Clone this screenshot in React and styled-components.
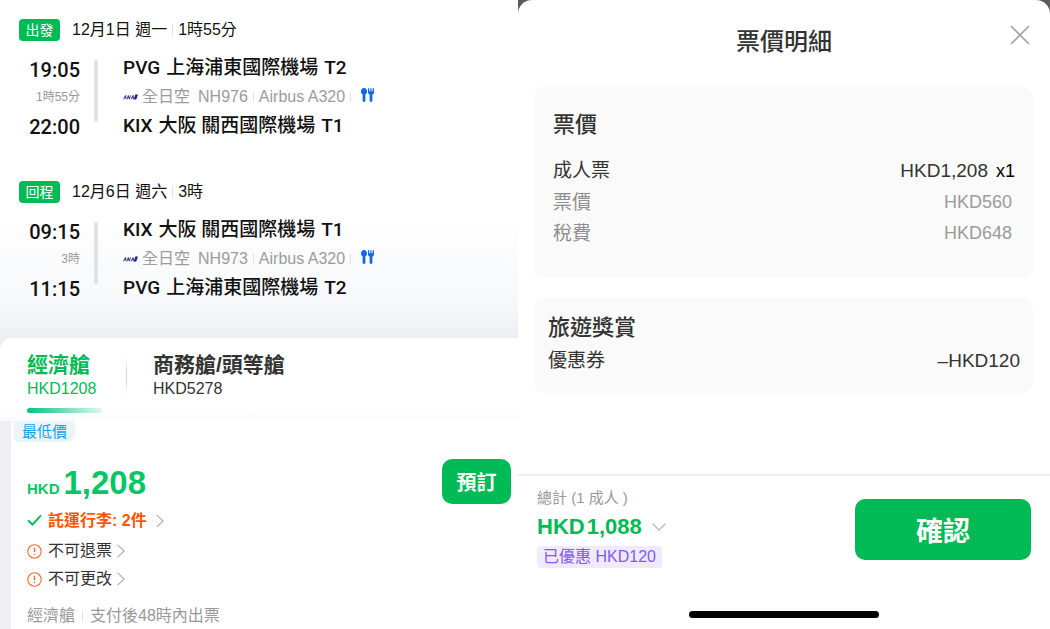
import React from 'react';
import styled, { createGlobalStyle } from 'styled-components';

const text = '"Liberation Sans", "Noto Sans CJK TC", sans-serif';
const medium = 'Roboto, "Noto Sans CJK TC", sans-serif';
const green = '#00ba55';

const GlobalStyle = createGlobalStyle`
  * { box-sizing: border-box; }
  body { margin: 0; background: #fff; font-family: ${text}; color: #333; }
  h1, h2, p, dl, dt, dd { margin: 0; font-weight: 400; }
  button { font-family: ${text}; border: 0; padding: 0; background: none; color: inherit; cursor: pointer; }
  svg { display: block; flex: none; }
`;

const Page = styled.div`
  display: grid;
  grid-template-columns: 518fr 532fr;
  min-height: 100vh;
`;

/* flight pane */

const FlightPane = styled.main`
  display: flex;
  flex-direction: column;
  min-width: 0;
`;

const Itinerary = styled.div`
  display: flex;
  flex-direction: column;
  gap: 39px;
  padding: 19px 19px 47px;
  margin-bottom: -13px;
  background: linear-gradient(#fff 62%, #f6f7fa 88%, #ebeef4 97%);
`;

const LegHeader = styled.div`
  display: flex;
  align-items: center;
  height: 22px;
  font-size: 16px;
  line-height: 22px;
  color: #111;
`;

const LegTag = styled.span`
  width: 41px;
  margin-right: 12px;
  border-radius: 4px;
  background: ${green};
  color: #fff;
  font-size: 14px;
  line-height: 22px;
  text-align: center;
`;

const Divider = styled.span`
  width: 1px;
  height: ${p => p.$h || 12}px;
  margin: 0 ${p => p.$gap || 5}px;
  background: #e2e2e2;
`;

const LegBody = styled.div`
  display: flex;
  margin-top: 12px;
`;

const Times = styled.div`
  width: 61px;
  padding-top: 3px;
  text-align: right;
`;

const Time = styled.div`
  font: 500 20px/29px ${medium};
  color: #111;
`;

const Duration = styled.div`
  font-size: 12px;
  line-height: 24px;
  height: 28px;
  color: #999;
`;

const Rail = styled.div`
  width: 4px;
  height: 62px;
  margin: 7px 25px 0 14px;
  border-radius: 2px;
  background: #e2e2e2;
`;

const Airport = styled.div`
  display: flex;
  gap: 6px;
  font: 500 19px/29px ${medium};
  color: #111;
`;

const Flight = styled.div`
  display: flex;
  align-items: center;
  height: 29px;
  font-size: 16px;
  line-height: 29px;
  color: #9b9b9b;
`;

const Airline = styled.span`
  margin: 0 8px 0 4px;
`;

const Meal = styled.span`
  margin: -3px 0 0 5px;
`;

const Cabins = styled.div`
  display: flex;
  height: 83px;
  padding: 14px 27px 8px;
  border-top-left-radius: 12px;
  background: linear-gradient(#fff 85%, #fbfbfb);
`;

const Cabin = styled.button`
  display: flex;
  flex-direction: column;
  align-items: stretch;
  text-align: left;
  color: ${p => (p.$active ? green : '#333')};
`;

const CabinName = styled.span`
  font: 700 21px/26px ${text};
`;

const CabinPrice = styled.span`
  font-size: 16px;
  line-height: 22px;
`;

const Underline = styled.span`
  width: 75px;
  height: 5px;
  margin-top: 8px;
  border-radius: 3px;
  background: linear-gradient(90deg, #00c47c, #dff8ec);
`;

const CabinDivider = styled.span`
  width: 1px;
  height: 40px;
  margin: 4px 26px 0 24px;
  background: linear-gradient(#fff, #ccc, #fff);
`;

const FareArea = styled.div`
  flex: 1;
  padding-left: 11px;
  background: #efeff4;
`;

const FareCard = styled.section`
  height: 100%;
  padding: 0 7px 0 3px;
  border-top-left-radius: 4px;
  background: #fff;
`;

const LowestTag = styled.span`
  display: block;
  width: 61px;
  border-radius: 0 0 8px 4px;
  background: #eaf6ff;
  color: #159fe8;
  font-size: 15px;
  line-height: 21px;
  text-align: center;
`;

const FareBody = styled.div`
  padding: 17px 0 0 13px;
`;

const FareTop = styled.div`
  display: flex;
  justify-content: space-between;
  height: 47px;
`;

const FarePrice = styled.div`
  display: flex;
  align-items: baseline;
  gap: 4px;
  font-weight: 700;
  color: #05c667;
`;

const FareCurrency = styled.span`
  font-size: 15px;
`;

const FareAmount = styled.span`
  font-size: 33px;
  line-height: 48px;
`;

const BookButton = styled.button`
  width: 69px;
  height: 45px;
  border-radius: 10px;
  background: ${green};
  color: #fff;
  font-size: 20px;
  font-weight: 700;
`;

const Rules = styled.div`
  display: flex;
  flex-direction: column;
  align-items: flex-start;
  gap: 4px;
`;

const Rule = styled.button`
  display: flex;
  align-items: center;
  gap: ${p => (p.$accent ? 9 : 5)}px;
  height: ${p => (p.$accent ? 29 : 24)}px;
  font-size: 16px;
  line-height: 24px;
  font-weight: ${p => (p.$accent ? 700 : 400)};
  color: ${p => (p.$accent ? '#ff5500' : '#333')};
`;

const RuleText = styled.span`
  display: flex;
  align-items: center;
  gap: 6px;
`;

const FareNote = styled.p`
  display: flex;
  align-items: center;
  margin-top: 12px;
  font-size: 16px;
  line-height: 26px;
  color: #999;
`;

/* price detail pane */

const DetailBackdrop = styled.div`
  display: flex;
  min-width: 0;
  background: #5a5a5c;
`;

const Sheet = styled.aside`
  display: flex;
  flex: 1;
  flex-direction: column;
  border-radius: 14px 14px 0 0;
  background: #fff;
`;

const SheetHeader = styled.header`
  display: grid;
  grid-template-columns: 1fr auto 1fr;
  align-items: center;
  height: 87px;
  padding: 0 20px 3px 20px;
`;

const SheetTitle = styled.h1`
  grid-column: 2;
  font: 500 24px/36px ${medium};
`;

const CloseButton = styled.button`
  justify-self: end;
  margin-bottom: 14px;
`;

const Card = styled.section`
  margin: 0 17px 19px 16px;
  padding: ${p => p.$pad};
  border-radius: 10px;
  background: #fafafa;
`;

const CardTitle = styled.h2`
  margin-bottom: ${p => p.$space || 0}px;
  font: 500 22px/34px ${medium};
`;

const Line = styled.div`
  display: flex;
  justify-content: space-between;
  font-size: ${p => (p.$sub ? 18 : 19)}px;
  line-height: 31px;
  color: ${p => (p.$sub ? '#9b9b9b' : '#333')};
  padding-right: ${p => (p.$sub ? 3 : 0)}px;
`;

const Label = styled.dt`
  font-size: 19px;
  color: ${p => (p.$sub ? '#8f8f8f' : '#333')};
`;

const Quantity = styled.span`
  margin-left: 8px;
  font-size: 18px;
  color: #000;
`;

const Footer = styled.footer`
  margin-top: auto;
  border-top: 2px solid #f0f0f0;
`;

const FooterRow = styled.div`
  display: flex;
  justify-content: space-between;
  padding: 10px 19px 0;
  height: 135px;
`;

const TotalLabel = styled.p`
  font-size: 15px;
  line-height: 24px;
  color: #999;
`;

const Total = styled.button`
  display: flex;
  align-items: center;
  gap: 10px;
  height: 34px;
  font-size: 22px;
  line-height: 34px;
  font-weight: 700;
  color: ${green};
`;

const TotalPrice = styled.span`
  display: flex;
  gap: 2px;
`;

const Saved = styled.span`
  display: inline-block;
  margin-top: 2px;
  padding: 0 6px;
  border-radius: 4px;
  background: #efeafd;
  color: #8259f0;
  font-size: 16px;
  line-height: 22px;
`;

const ConfirmButton = styled.button`
  width: 176px;
  height: 61px;
  margin-top: 13px;
  border-radius: 10px;
  background: ${green};
  color: #fff;
  font-size: 27px;
  font-weight: 700;
`;

const HomeBar = styled.div`
  width: 190px;
  height: 7px;
  margin: 0 auto 11px;
  border-radius: 4px;
  background: #000;
`;

const AnaLogo = () => (
  <svg width="15" height="6" viewBox="0 0 15 6" aria-label="ANA">
    <path d="M0 5.2 2.2 1.2h1l.3 4H2.6V4.3H1.5L1 5.2zM3.8 5.2l1-4h.9l.8 2 .5-2h.8l-1 4h-.9l-.7-2-.5 2zM7.4 5.2l2.3-4h1l.2 4H10v-.9H9l-.5.9z" fill="#3c3b8c" />
    <path d="M10.6 5.6 12.4.6H15L13.2 5.6z" fill="#1d2088" />
    <path d="M13.5 5.6 15 1.6V.6z" fill="#3fa9e0" />
  </svg>
);

const MealIcon = () => (
  <svg width="13" height="14" viewBox="0 0 13 14" fill="#0f66e8" aria-label="meal">
    <path d="M3 0C4.800 0 6 1.500 6 3.400c0 1.400-.6 2.400-1.600 2.900V12.600a1.400 1.400 0 0 1-2.800 0V6.300C.6 5.800 0 4.800 0 3.400 0 1.500 1.200 0 3 0z" />
    <path d="M7 .3h1v2.900h.8V.3h.9v2.900h.8V.3h.9v2.900h.7V.3h.9v4c0 1.300-.7 2-1.600 2.300v6a1.400 1.400 0 0 1-2.800 0v-6C7.700 6.300 7 5.600 7 4.300z" />
  </svg>
);

const CheckIcon = () => (
  <svg width="15" height="13" viewBox="0 0 15 13" fill="none" stroke={green} strokeWidth="2">
    <path d="M1 6.200 5.400 10.600 14 1.400" />
  </svg>
);

const WarnIcon = () => (
  <svg width="15" height="15" viewBox="0 0 15 15" fill="none" stroke="#ff6a33">
    <circle cx="7.500" cy="7.500" r="6.700" strokeWidth="1.100" />
    <path d="M7.500 3.800v4.500M7.500 9.700v1.400" strokeWidth="1.400" />
  </svg>
);

const ChevronRight = () => (
  <svg width="8" height="14" viewBox="0 0 8 14" fill="none" stroke="#aaa" strokeWidth="1.100">
    <path d="M.6.800 7.200 7 .6 13.200" />
  </svg>
);

const ChevronDown = () => (
  <svg width="14" height="8" viewBox="0 0 14 8" fill="none" stroke="#a3b1c0" strokeWidth="1.200">
    <path d="M.6.700 7 7.100 13.400.700" />
  </svg>
);

const CloseIcon = () => (
  <svg width="20" height="20" viewBox="0 0 20 20" fill="none" stroke="#a3a3a3" strokeWidth="1.700" strokeLinecap="round">
    <path d="M1.500 1.500 18.500 18.500M18.500 1.500 1.500 18.500" />
  </svg>
);

const PVG = ['PVG', '上海浦東國際機場', 'T2'];
const KIX = ['KIX', '大阪 關西國際機場', 'T1'];

const legs = [
  { tag: '出發', date: '12月1日 週一', duration: '1時55分', start: '19:05', end: '22:00', from: PVG, to: KIX, flight: 'NH976' },
  { tag: '回程', date: '12月6日 週六', duration: '3時', start: '09:15', end: '11:15', from: KIX, to: PVG, flight: 'NH973' },
];

const Stop = ({ parts }) => (
  <Airport>
    {parts.map(part => <span key={part}>{part}</span>)}
  </Airport>
);

const Leg = ({ leg }) => (
  <section>
    <LegHeader>
      <LegTag>{leg.tag}</LegTag>
      <span>{leg.date}</span>
      <Divider />
      <span>{leg.duration}</span>
    </LegHeader>
    <LegBody>
      <Times>
        <Time>{leg.start}</Time>
        <Duration>{leg.duration}</Duration>
        <Time>{leg.end}</Time>
      </Times>
      <Rail />
      <div>
        <Stop parts={leg.from} />
        <Flight>
          <AnaLogo />
          <Airline>全日空</Airline>
          <span>{leg.flight}</span>
          <Divider $h={10} />
          <span>Airbus A320</span>
          <Divider $h={10} />
          <Meal><MealIcon /></Meal>
        </Flight>
        <Stop parts={leg.to} />
      </div>
    </LegBody>
  </section>
);

export default function App() {
  return (
    <>
      <GlobalStyle />
      <Page>
        <FlightPane>
          <Itinerary>
            {legs.map(leg => <Leg key={leg.tag} leg={leg} />)}
          </Itinerary>
          <Cabins>
            <Cabin $active>
              <CabinName>經濟艙</CabinName>
              <CabinPrice>HKD1208</CabinPrice>
              <Underline />
            </Cabin>
            <CabinDivider />
            <Cabin>
              <CabinName>商務艙/頭等艙</CabinName>
              <CabinPrice>HKD5278</CabinPrice>
            </Cabin>
          </Cabins>
          <FareArea>
            <FareCard>
              <LowestTag>最低價</LowestTag>
              <FareBody>
                <FareTop>
                  <FarePrice>
                    <FareCurrency>HKD</FareCurrency>
                    <FareAmount>1,208</FareAmount>
                  </FarePrice>
                  <BookButton>預訂</BookButton>
                </FareTop>
                <Rules>
                  <Rule $accent>
                    <RuleText><CheckIcon />託運行李: 2件</RuleText>
                    <ChevronRight />
                  </Rule>
                  <Rule>
                    <RuleText><WarnIcon />不可退票</RuleText>
                    <ChevronRight />
                  </Rule>
                  <Rule>
                    <RuleText><WarnIcon />不可更改</RuleText>
                    <ChevronRight />
                  </Rule>
                </Rules>
                <FareNote>
                  經濟艙
                  <Divider $gap={7} />
                  支付後48時內出票
                </FareNote>
              </FareBody>
            </FareCard>
          </FareArea>
        </FlightPane>

        <DetailBackdrop>
          <Sheet>
            <SheetHeader>
              <SheetTitle>票價明細</SheetTitle>
              <CloseButton aria-label="關閉"><CloseIcon /></CloseButton>
            </SheetHeader>
            <Card $pad="21px 18px 30px 19px">
              <CardTitle $space={13}>票價</CardTitle>
              <dl>
                <Line>
                  <Label>成人票</Label>
                  <dd>HKD1,208<Quantity>x1</Quantity></dd>
                </Line>
                <Line $sub>
                  <Label $sub>票價</Label>
                  <dd>HKD560</dd>
                </Line>
                <Line $sub>
                  <Label $sub>稅費</Label>
                  <dd>HKD648</dd>
                </Line>
              </dl>
            </Card>
            <Card $pad="13px 13px 17px 14px">
              <CardTitle>旅遊獎賞</CardTitle>
              <dl>
                <Line>
                  <Label>優惠券</Label>
                  <dd>–HKD120</dd>
                </Line>
              </dl>
            </Card>
            <Footer>
              <FooterRow>
                <div>
                  <TotalLabel>總計 (1 成人 )</TotalLabel>
                  <Total>
                    <TotalPrice><span>HKD</span><span>1,088</span></TotalPrice>
                    <ChevronDown />
                  </Total>
                  <Saved>已優惠 HKD120</Saved>
                </div>
                <ConfirmButton>確認</ConfirmButton>
              </FooterRow>
              <HomeBar />
            </Footer>
          </Sheet>
        </DetailBackdrop>
      </Page>
    </>
  );
}
